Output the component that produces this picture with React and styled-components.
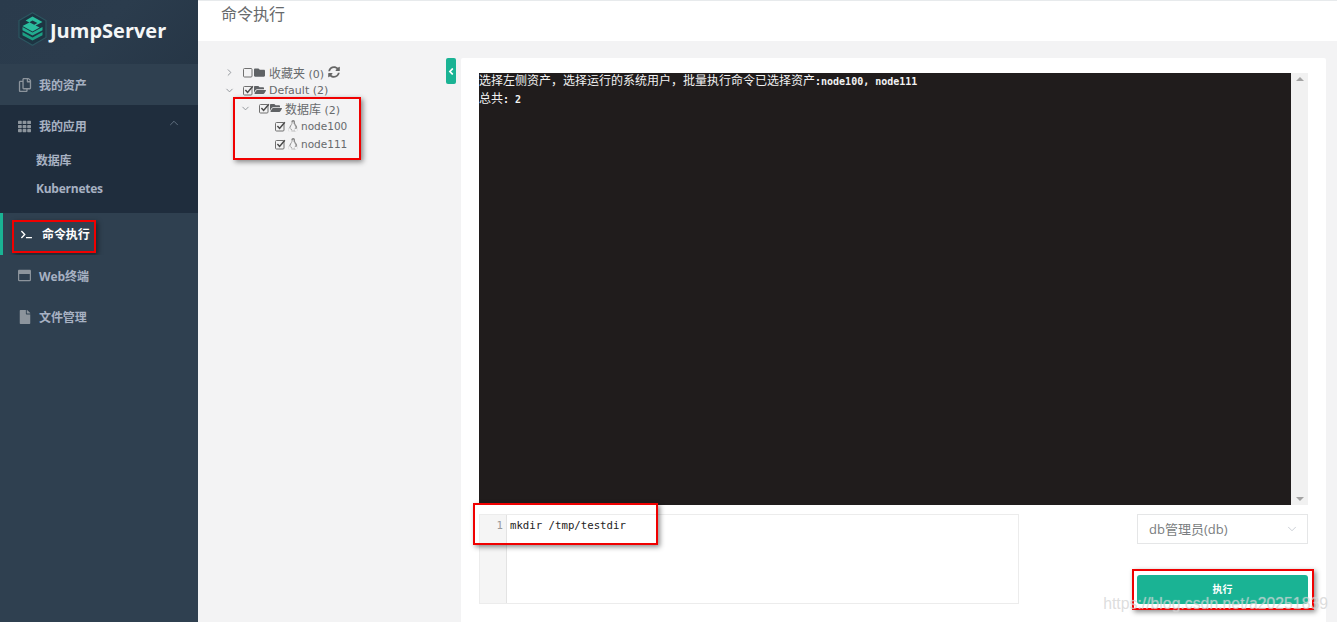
import styled, { createGlobalStyle } from "styled-components";
import {
  FaRegCopy,
  FaTh,
  FaTerminal,
  FaRegWindowMaximize,
  FaFile,
  FaFolder,
  FaFolderOpen,
  FaLinux,
  FaSyncAlt,
  FaAngleLeft,
} from "react-icons/fa";
import { ChevronDown, ChevronRight, ChevronUp } from "lucide-react";

const UI_FONT = `"Open Sans", "Noto Sans CJK SC", sans-serif`;
const TREE_FONT = `"DejaVu Sans", "Noto Sans CJK SC", sans-serif`;
const MONO_FONT = `"DejaVu Sans Mono", "Noto Sans CJK SC", monospace`;

const GlobalStyle = createGlobalStyle`
  html, body {
    margin: 0;
    padding: 0;
    height: 622px;
    overflow: hidden;
    background: #f3f3f4;
  }
  * {
    box-sizing: border-box;
  }
`;

const Logo = () => (
  <svg width="29" height="34" viewBox="0 0 29 34">
    <path d="M14.5 0.8 L28 8.6 V25.4 L14.5 33.2 L1 25.4 V8.6 Z" fill="#1d3442" stroke="#2c5660" strokeWidth="1.2" />
    <path d="M4.5 20 L14.5 25.4 L24.5 20 V23.2 L14.5 28.6 L4.5 23.2 Z" fill="#1c9f83" />
    <path d="M4.5 15 L14.5 20.4 L24.5 15 V18.2 L14.5 23.6 L4.5 18.2 Z" fill="#22ad90" />
    <path d="M14.5 4.6 L24.5 10 L17.6 13.6 L21.6 15.6 L14.5 19.4 L4.5 14 L11.4 10.4 L7.6 8.4 Z" fill="#2bbd9e" />
    <path d="M11.4 10.2 L14.5 8.6 L19.4 11 L16.2 12.8 Z" fill="#1d3442" />
  </svg>
);

// zTree style checkbox, the tick sticks out past the box
const CheckBox = ({ checked }) => (
  <svg width="11" height="12" viewBox="0 0 11 12">
    <rect x="0.5" y="2.5" width="8.5" height="8.5" rx="1" fill="none" stroke="#707070" />
    {checked && <path d="M2.4 6 L4.6 8.4 L9.8 2.2" fill="none" stroke="#4a4a4a" strokeWidth="1.5" />}
  </svg>
);

const NodeRow = ({ name }) => (
  <TreeRow $level={2}>
    <CheckBox checked />
    <Glyph $indent={1}>
      <FaLinux size={12} color="#858585" />
    </Glyph>
    <NodeLabel>{name}</NodeLabel>
  </TreeRow>
);

const App = () => {
  return (
    <Page>
      <GlobalStyle />
      <Sidebar>
        <Brand>
          <Logo />
          <BrandName>JumpServer</BrandName>
        </Brand>
        <NavItem>
          <NavIcon>
            <FaRegCopy size={14} />
          </NavIcon>
          我的资产
        </NavItem>
        <NavGroup>
          <NavItem $open>
            <NavIcon>
              <FaTh size={13} />
            </NavIcon>
            我的应用
            <Caret>
              <ChevronUp size={14} strokeWidth={1.2} />
            </Caret>
          </NavItem>
          <SubItem>数据库</SubItem>
          <SubItem>Kubernetes</SubItem>
        </NavGroup>
        <NavItem $active>
          <NavIcon $active>
            <FaTerminal size={11} />
          </NavIcon>
          命令执行
          <RedBox $left={9} $top={7} $width={84} $height={33} />
        </NavItem>
        <NavItem>
          <NavIcon>
            <FaRegWindowMaximize size={13} />
          </NavIcon>
          Web终端
        </NavItem>
        <NavItem>
          <NavIcon>
            <FaFile size={14} />
          </NavIcon>
          文件管理
        </NavItem>
      </Sidebar>

      <Main>
        <TopBar>命令执行</TopBar>
        <Content>
          <TreeColumn>
            <TreeRow>
              <Arrow>
                <ChevronRight size={11} />
              </Arrow>
              <CheckBox />
              <Glyph>
                <FaFolder size={11} />
              </Glyph>
              <TreeLabel>
                <Cjk>收藏夹</Cjk> (0)
              </TreeLabel>
              <FaSyncAlt size={12} color="#666" />
            </TreeRow>
            <TreeRow>
              <Arrow>
                <ChevronDown size={11} />
              </Arrow>
              <CheckBox checked />
              <Glyph>
                <FaFolderOpen size={12} />
              </Glyph>
              <TreeLabel>Default (2)</TreeLabel>
            </TreeRow>
            <TreeRow $level={1}>
              <Arrow>
                <ChevronDown size={11} />
              </Arrow>
              <CheckBox checked />
              <Glyph>
                <FaFolderOpen size={12} />
              </Glyph>
              <TreeLabel>
                <Cjk>数据库</Cjk> (2)
              </TreeLabel>
            </TreeRow>
            <NodeRow name="node100" />
            <NodeRow name="node111" />
            <RedBox $left={35} $top={39} $width={128} $height={63} />
            <Toggle>
              <FaAngleLeft size={11} />
            </Toggle>
          </TreeColumn>

          <Panel>
            <Terminal>
              <Screen>
                <Line>
                  选择左侧资产，选择运行的系统用户，批量执行命令已选择资产<Latin>:node100, node111</Latin>
                </Line>
                <Line>
                  总共<Latin>: 2</Latin>
                </Line>
              </Screen>
              <ScrollTrack>
                <ScrollArrow />
                <ScrollArrow $down />
              </ScrollTrack>
            </Terminal>

            <Controls>
              <Editor>
                <Gutter>1</Gutter>
                <Code>mkdir /tmp/testdir</Code>
                <RedBox $left={-7} $top={-12} $width={185} $height={42} />
              </Editor>
              <Actions>
                <Select>
                  db管理员(db)
                  <ChevronDown size={14} strokeWidth={1.2} color="#b5bcc4" />
                </Select>
                <RunButton>
                  执行
                  <RedBox $left={-5} $top={-6} $width={182} $height={41} />
                </RunButton>
              </Actions>
            </Controls>
          </Panel>
        </Content>
      </Main>
      <Watermark>https://blog.csdn.net/a20251839</Watermark>
    </Page>
  );
};

export default App;

const Page = styled.div`
  position: relative;
  display: flex;
  width: 1337px;
  height: 622px;
  overflow: hidden;
  font-family: ${UI_FONT};
  background: #f3f3f4;
`;

const Sidebar = styled.aside`
  width: 198px;
  flex-shrink: 0;
  background: #2f4050;
`;

const Brand = styled.div`
  height: 64px;
  display: flex;
  align-items: center;
  gap: 3px;
  padding: 0 0 6px 18px;
  background: linear-gradient(135deg, #2a3b4c 0%, #2b3c4d 50%, #263646 100%);
`;

const BrandName = styled.span`
  font-family: "Open Sans", sans-serif;
  font-size: 20px;
  font-weight: 700;
  color: #f4f6f7;
  padding-top: 2px;
`;

const NavGroup = styled.div`
  background: #1f2d3d;
  padding-bottom: 10px;
`;

const NavItem = styled.div`
  position: relative;
  height: ${(p) => (p.$open ? "40px" : p.$active ? "42px" : "41px")};
  display: flex;
  align-items: center;
  padding: ${(p) => (p.$open ? "2px" : "0")} 0 0 18px;
  font-size: 12px;
  font-weight: 700;
  letter-spacing: -0.1px;
  color: ${(p) => (p.$active ? "#ffffff" : "#a7b1c2")};
  background: ${(p) => (p.$open ? "#1f2d3d" : "#2f4050")};
  border-left: ${(p) => (p.$active ? "3px solid #1ab394" : "none")};
`;

const NavIcon = styled.span`
  width: 21px;
  flex-shrink: 0;
  display: flex;
  align-items: center;
  color: ${(p) => (p.$active ? "#ffffff" : "#8c949c")};
`;

const Caret = styled.span`
  position: absolute;
  right: 17px;
  top: 11px;
  color: #7b8b9b;
`;

const SubItem = styled.div`
  height: 29px;
  display: flex;
  align-items: center;
  padding-left: 36px;
  font-size: 12px;
  font-weight: 700;
  letter-spacing: -0.25px;
  color: #a7b1c2;
`;

const Main = styled.main`
  flex: 1;
  min-width: 0;
  display: flex;
  flex-direction: column;
`;

const TopBar = styled.header`
  height: 41px;
  flex-shrink: 0;
  padding: 3px 0 0 23px;
  background: #ffffff;
  border-top: 1px solid #e7eaec;
  font-size: 16px;
  line-height: 20px;
  color: #676a6c;
`;

const Content = styled.div`
  flex: 1;
  display: flex;
  padding: 17px 11px 0 0;
`;

const TreeColumn = styled.div`
  position: relative;
  width: 263px;
  flex-shrink: 0;
  padding: 5px 0 0 26px;
`;

const TreeRow = styled.div`
  height: 18px;
  display: flex;
  align-items: center;
  padding-left: ${(p) => (p.$level === 2 ? "51px" : p.$level === 1 ? "16px" : "0")};
  color: #5f6265;
`;

const Arrow = styled.span`
  width: 19px;
  display: flex;
  align-items: center;
  color: #8c9196;
`;

const Glyph = styled.span`
  width: 14px;
  flex-shrink: 0;
  display: flex;
  align-items: center;
  padding-left: ${(p) => p.$indent || 0}px;
`;

const TreeLabel = styled.span`
  margin: 0 4px 0 1px;
  font-family: ${TREE_FONT};
  font-size: 11px;
  color: #676a6c;
  white-space: pre;
`;

const NodeLabel = styled(TreeLabel)`
  font-size: 10.5px;
`;

const Cjk = styled.span`
  font-size: 12px;
`;

const Toggle = styled.div`
  position: absolute;
  right: 5px;
  top: 0;
  width: 10px;
  height: 26px;
  display: flex;
  align-items: center;
  justify-content: center;
  border-radius: 2px;
  background: #1ab394;
  color: #ffffff;
`;

const Panel = styled.section`
  flex: 1;
  min-width: 0;
  display: flex;
  flex-direction: column;
  padding: 15px 18px 0 18px;
  background: #ffffff;
  border-radius: 2px 2px 0 0;
`;

const Terminal = styled.div`
  display: flex;
  height: 432px;
  flex-shrink: 0;
`;

const Screen = styled.div`
  flex: 1;
  min-width: 0;
  background: #201c1c;
  color: #f2f2f2;
  font-family: ${MONO_FONT};
  font-size: 12px;
`;

const Line = styled.div`
  height: 18px;
  line-height: 16px;
  white-space: pre;
`;

const Latin = styled.span`
  font-size: 10px;
  font-weight: 700;
`;

const ScrollTrack = styled.div`
  width: 17px;
  flex-shrink: 0;
  display: flex;
  flex-direction: column;
  justify-content: space-between;
  padding: 4px 0;
  background: #f1f1f1;
`;

const ScrollArrow = styled.span`
  width: 0;
  height: 0;
  margin: 0 auto;
  border-left: 4px solid transparent;
  border-right: 4px solid transparent;
  border-bottom: ${(p) => (p.$down ? "0" : "4px solid #a3a3a3")};
  border-top: ${(p) => (p.$down ? "4px solid #a3a3a3" : "0")};
`;

const Controls = styled.div`
  display: flex;
  justify-content: space-between;
  margin-top: 9px;
`;

const Editor = styled.div`
  position: relative;
  width: 540px;
  height: 90px;
  display: flex;
  border: 1px solid #ececec;
`;

const Gutter = styled.div`
  width: 27px;
  flex-shrink: 0;
  padding: 2px 3px 0 0;
  background: #f5f5f5;
  border-right: 1px solid #e3e3e3;
  text-align: right;
  font-family: ${MONO_FONT};
  font-size: 10.7px;
  line-height: 18px;
  color: #999;
`;

const Code = styled.div`
  padding: 2px 0 0 3px;
  font-family: ${MONO_FONT};
  font-size: 10.7px;
  line-height: 18px;
  color: #222;
`;

const Actions = styled.div`
  width: 171px;
  display: flex;
  flex-direction: column;
  align-items: flex-end;
`;

const Select = styled.div`
  width: 171px;
  height: 30px;
  display: flex;
  align-items: center;
  justify-content: space-between;
  padding: 0 8px 1px 11px;
  background: #ffffff;
  border: 1px solid #e5e6e7;
  font-size: 13px;
  color: #7a7d80;
`;

const RunButton = styled.button`
  position: relative;
  width: 171px;
  height: 29px;
  margin-top: 31px;
  padding: 0 0 2px;
  border: none;
  border-radius: 3px;
  background: #1ab394;
  color: #ffffff;
  font-family: ${UI_FONT};
  font-size: 10px;
  font-weight: 700;
`;

const RedBox = styled.span`
  position: absolute;
  left: ${(p) => p.$left}px;
  top: ${(p) => p.$top}px;
  width: ${(p) => p.$width}px;
  height: ${(p) => p.$height}px;
  border: 2px solid #f00000;
  box-shadow: 2px 2px 5px rgba(0, 0, 0, 0.45);
  pointer-events: none;
`;

const Watermark = styled.div`
  position: absolute;
  right: 9px;
  bottom: 9px;
  font-family: "Liberation Sans", Arial, sans-serif;
  font-size: 15.8px;
  color: rgba(200, 200, 200, 0.62);
  text-shadow: 0 0 1px rgba(255, 255, 255, 0.5);
  white-space: nowrap;
`;
